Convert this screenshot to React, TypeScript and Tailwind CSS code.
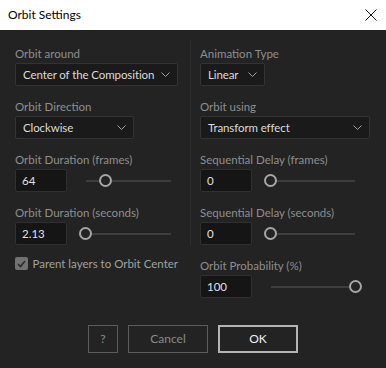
import React from 'react';

const font = { fontFamily: 'Lato, "Noto Sans", sans-serif' };

function Label({ children }: { children: React.ReactNode }) {
  return <div className="h-[17px] text-[11.5px] leading-[16px] whitespace-nowrap text-[#8e8e8e]">{children}</div>;
}

function Chevron() {
  return (
    <svg width="9" height="5" viewBox="0 0 9 5" className="shrink-0">
      <path d="M0.5 0.5 L4.5 4.5 L8.5 0.5" fill="none" stroke="#a0a0a0" strokeWidth="1" />
    </svg>
  );
}

function Dropdown({ value, width }: { value: string; width: string }) {
  return (
    <div
      className={`${width} h-[23px] flex items-center justify-between pl-[7px] pr-[7px] bg-[#1a1a1a] border border-[#333333] rounded-[2px] text-[11.5px] tracking-[-0.1px] whitespace-nowrap text-[#dadada]`}
    >
      <span>{value}</span>
      <Chevron />
    </div>
  );
}

function NumberBox({ value }: { value: string }) {
  return (
    <div className="w-[52px] h-[23px] shrink-0 flex items-center pl-[6px] bg-[#151515] border border-[#303030] rounded-[2px] text-[11.5px] text-[#e0e0e0]">
      {value}
    </div>
  );
}

function Slider({ pos, width }: { pos: number; width: string }) {
  return (
    <div className={`relative ${width} h-[13px] ml-[12px]`}>
      <div className="absolute left-[7px] right-[7px] top-[6px] h-[2px] bg-[#3d3d3d]" />
      <div
        className="absolute top-0 w-[13px] h-[13px] rounded-full border-2 border-[#a6a6a6] bg-[#232323]"
        style={{ left: pos }}
      />
    </div>
  );
}

function NumberField({ label, value, pos, sliderW }: { label: string; value: string; pos: number; sliderW: string }) {
  return (
    <div>
      <Label>{label}</Label>
      <div className="flex items-center">
        <NumberBox value={value} />
        <Slider pos={pos} width={sliderW} />
      </div>
    </div>
  );
}

export default function App() {
  return (
    <div className="w-[386px] h-[368px] bg-[#232323] flex flex-col" style={font}>
      {/* Title bar */}
      <div className="h-[30px] bg-white flex items-center justify-between pl-[8px] pr-[9px]">
        <span className="text-[12px] text-black">Orbit Settings</span>
        <svg width="12" height="12" viewBox="0 0 12 12">
          <path d="M0.5 0.5 L11.5 11.5 M11.5 0.5 L0.5 11.5" stroke="#111" strokeWidth="1" />
        </svg>
      </div>

      {/* Body */}
      <div className="flex px-[15px] pt-[16px]">
        <div className="w-[163px] flex flex-col gap-[13px]">
          <div>
            <Label>Orbit around</Label>
            <Dropdown value="Center of the Composition" width="w-[163px]" />
          </div>
          <div>
            <Label>Orbit Direction</Label>
            <Dropdown value="Clockwise" width="w-[119px]" />
          </div>
          <NumberField label="Orbit Duration (frames)" value="64" pos={20} sliderW="w-[99px]" />
          <NumberField label="Orbit Duration (seconds)" value="2.13" pos={0} sliderW="w-[99px]" />
          <div className="flex items-center gap-[5px] -mt-[3px]">
            <div className="w-[13px] h-[13px] rounded-[2px] bg-[#727272] flex items-center justify-center">
              <svg width="9" height="8" viewBox="0 0 9 8">
                <path d="M1 4 L3.5 6.5 L8 1" fill="none" stroke="#2a2a2a" strokeWidth="1.6" />
              </svg>
            </div>
            <span className="text-[11.5px] whitespace-nowrap text-[#a0a0a0]">Parent layers to Orbit Center</span>
          </div>
        </div>

        <div className="w-px h-[205px] bg-[#2e2e2e] ml-[12px] -mt-[6px]" />

        <div className="w-[170px] ml-[9px] flex flex-col gap-[13px]">
          <div>
            <Label>Animation Type</Label>
            <Dropdown value="Linear" width="w-[65px]" />
          </div>
          <div>
            <Label>Orbit using</Label>
            <Dropdown value="Transform effect" width="w-[170px]" />
          </div>
          <NumberField label="Sequential Delay (frames)" value="0" pos={0} sliderW="w-[98px]" />
          <NumberField label="Sequential Delay (seconds)" value="0" pos={0} sliderW="w-[98px]" />
          <NumberField label="Orbit Probability (%)" value="100" pos={85} sliderW="w-[98px]" />
        </div>
      </div>

      {/* Buttons */}
      <div className="flex justify-center gap-[10px] mt-auto mb-[15px]">
        <button className="w-[30px] h-[28px] border border-[#5c5c5c] text-[12px] text-[#8a8a8a]">?</button>
        <button className="w-[80px] h-[28px] border border-[#5c5c5c] text-[12px] text-[#8a8a8a]">Cancel</button>
        <button className="w-[80px] h-[28px] border-2 border-[#b4b4b4] text-[12px] text-[#f0f0f0]">OK</button>
      </div>
    </div>
  );
}
